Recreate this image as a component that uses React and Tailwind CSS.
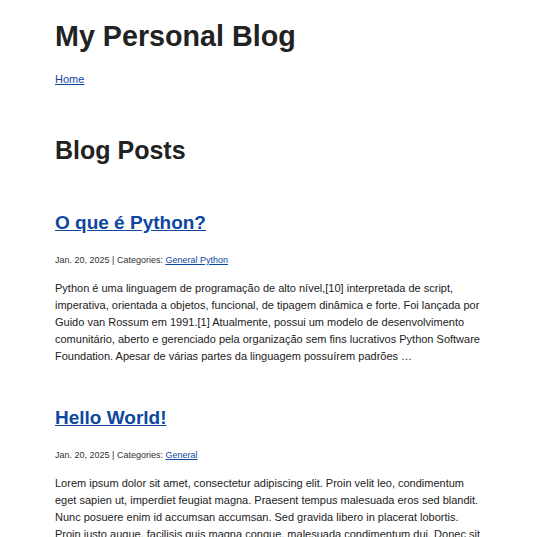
export default function App() {
  const posts = [
    {
      title: "O que é Python?",
      date: "Jan. 20, 2025",
      cats: "General Python",
      body:
        "Python é uma linguagem de programação de alto nível,[10] interpretada de script, imperativa, orientada a objetos, funcional, de tipagem dinâmica e forte. Foi lançada por Guido van Rossum em 1991.[1] Atualmente, possui um modelo de desenvolvimento comunitário, aberto e gerenciado pela organização sem fins lucrativos Python Software Foundation. Apesar de várias partes da linguagem possuírem padrões …",
    },
    {
      title: "Hello World!",
      date: "Jan. 20, 2025",
      cats: "General",
      body:
        "Lorem ipsum dolor sit amet, consectetur adipiscing elit. Proin velit leo, condimentum eget sapien ut, imperdiet feugiat magna. Praesent tempus malesuada eros sed blandit. Nunc posuere enim id accumsan accumsan. Sed gravida libero in placerat lobortis. Proin justo augue, facilisis quis magna congue, malesuada condimentum dui. Donec sit amet lorem quis nisi tincidunt porttitor.",
    },
  ];
  return (
    <div className="min-h-screen bg-white text-[#222] font-['Liberation_Sans',Arial,sans-serif]">
      <div className="mx-auto w-[427px]">
        <header>
          <h1 className="pt-[20px] text-[28.7px] leading-[32px] font-bold">My Personal Blog</h1>
          <nav className="mt-[20px] text-[11px] leading-[14px]">
            <a href="#" className="text-[#0d47a1] underline">Home</a>
          </nav>
        </header>
        <main>
          <h2 className="mt-[49px] text-[25px] leading-[30px] font-bold">Blog Posts</h2>
          <div className="mt-[46px] flex flex-col gap-[41px]">
            {posts.map((p) => (
              <article key={p.title}>
                <h3 className="text-[19px] leading-[24px] font-bold">
                  <a href="#" className="text-[#0d47a1] underline">{p.title}</a>
                </h3>
                <div className="mt-[19px] text-[9px] leading-[12px] text-[#333]">
                  {p.date} | Categories:{" "}
                  <a href="#" className="text-[#0d47a1] underline">{p.cats}</a>
                </div>
                <p className="mt-[14px] text-[11px] leading-[17px] text-[#222]">{p.body}</p>
              </article>
            ))}
          </div>
        </main>
      </div>
    </div>
  );
}
